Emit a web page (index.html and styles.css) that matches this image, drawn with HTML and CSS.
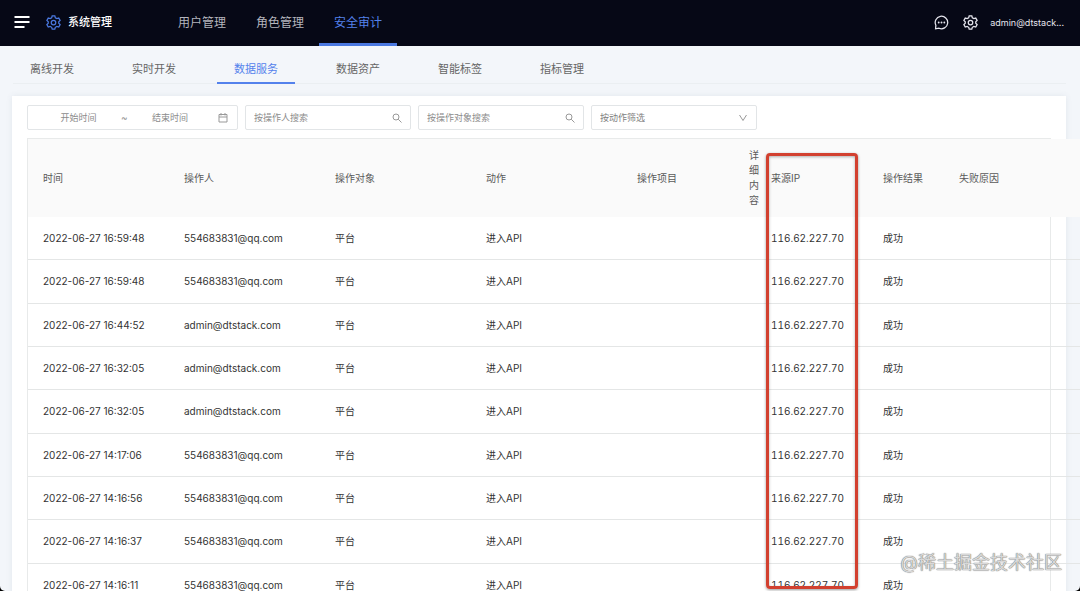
FILE: index.html
```html
<!DOCTYPE html>
<html lang="zh-CN">

<head>
  <meta charset="UTF-8">
  <meta name="viewport" content="width=device-width, initial-scale=1.0">
  <title>安全审计</title>
  <link rel="stylesheet" href="styles.css">
</head>

<body>
  <!-- gear is used twice in the header -->
  <svg class="sprite" aria-hidden="true">
    <symbol id="gear" viewBox="0 0 24 24">
      <path d="M9.900 1.300h4.200l.8 3.100 2.500 1.400 3-.9 2.200 3.700-2.200 2.200v2.400l2.200 2.300-2.200 3.700-3-.9-2.500 1.400-.8 3h-4.200l-.8-3-2.500-1.400-3 .9L1.400 15.500l2.200-2.300v-2.400L1.400 8.600l2.200-3.700 3 .9 2.500-1.400z" />
      <circle cx="12" cy="12" r="3.600" />
    </symbol>
  </svg>

  <div class="app">
    <header class="header">
      <button class="icon-btn menu-btn" type="button" aria-label="菜单">
        <svg width="16" height="14" viewBox="0 0 16 14">
          <path d="M0.500 2H15.500M0.500 7H15.500M0.500 12H10.500" />
        </svg>
      </button>
      <a class="brand" href="#">
        <svg class="gear" width="15" height="15"><use href="#gear" /></svg>
        <span>系统管理</span>
      </a>
      <nav class="main-nav">
        <a href="#">用户管理</a>
        <a href="#">角色管理</a>
        <a class="active" href="#">安全审计</a>
      </nav>
      <div class="header-right">
        <button class="icon-btn" type="button" aria-label="消息">
          <svg class="chat" width="15" height="15" viewBox="0 0 24 24">
            <path d="M2.500 22L3 16.500A10 10 0 1 1 8 21.200z" />
            <path class="dots" d="M7.500 12h.01M12 12h.01M16.500 12h.01" />
          </svg>
        </button>
        <button class="icon-btn" type="button" aria-label="设置">
          <svg class="gear" width="15" height="15"><use href="#gear" /></svg>
        </button>
        <a class="user" href="#">admin@dtstack...</a>
      </div>
    </header>

    <nav class="tabs">
      <a href="#">离线开发</a>
      <a href="#">实时开发</a>
      <a class="active" href="#">数据服务</a>
      <a href="#">数据资产</a>
      <a href="#">智能标签</a>
      <a href="#">指标管理</a>
    </nav>

    <main class="card">
      <form class="filters">
        <div class="field range">
          <input type="text" placeholder="开始时间" aria-label="开始时间">
          <span>~</span>
          <input type="text" placeholder="结束时间" aria-label="结束时间">
          <svg width="10" height="10" viewBox="0 0 10 10">
            <path d="M1 1.500H9V9H1zM1 4H9M3 0V2.500M7 0V2.500" />
          </svg>
        </div>
        <label class="field">
          <input type="text" placeholder="按操作人搜索" aria-label="按操作人搜索">
          <svg width="10" height="10" viewBox="0 0 10 10">
            <circle cx="4" cy="4" r="3" />
            <path d="M6.200 6.200L9.500 9.500" />
          </svg>
        </label>
        <label class="field">
          <input type="text" placeholder="按操作对象搜索" aria-label="按操作对象搜索">
          <svg width="10" height="10" viewBox="0 0 10 10">
            <circle cx="4" cy="4" r="3" />
            <path d="M6.200 6.200L9.500 9.500" />
          </svg>
        </label>
        <label class="field">
          <select aria-label="按动作筛选">
            <option>按动作筛选</option>
          </select>
          <svg width="10" height="10" viewBox="0 0 10 10">
            <path d="M1.500 2L5 7.500L8.500 2" />
          </svg>
        </label>
      </form>

      <div class="table-wrap">
        <table>
          <colgroup>
            <col class="col-time">
            <col class="col-wide">
            <col class="col-wide">
            <col class="col-wide">
            <col class="col-ip">
            <col class="col-detail">
            <col class="col-ip">
            <col class="col-result">
            <col class="col-reason">
          </colgroup>
          <thead>
            <tr>
              <th>时间</th>
              <th>操作人</th>
              <th>操作对象</th>
              <th>动作</th>
              <th>操作项目</th>
              <th>详细内容</th>
              <th>来源IP</th>
              <th>操作结果</th>
              <th>失败原因</th>
            </tr>
          </thead>
          <tbody>
            <tr><td>2022-06-27 16:59:48</td><td>554683831@qq.com</td><td>平台</td><td>进入API</td><td></td><td></td><td class="ip">116.62.227.70</td><td>成功</td><td></td></tr>
            <tr><td>2022-06-27 16:59:48</td><td>554683831@qq.com</td><td>平台</td><td>进入API</td><td></td><td></td><td class="ip">116.62.227.70</td><td>成功</td><td></td></tr>
            <tr><td>2022-06-27 16:44:52</td><td>admin@dtstack.com</td><td>平台</td><td>进入API</td><td></td><td></td><td class="ip">116.62.227.70</td><td>成功</td><td></td></tr>
            <tr><td>2022-06-27 16:32:05</td><td>admin@dtstack.com</td><td>平台</td><td>进入API</td><td></td><td></td><td class="ip">116.62.227.70</td><td>成功</td><td></td></tr>
            <tr><td>2022-06-27 16:32:05</td><td>admin@dtstack.com</td><td>平台</td><td>进入API</td><td></td><td></td><td class="ip">116.62.227.70</td><td>成功</td><td></td></tr>
            <tr><td>2022-06-27 14:17:06</td><td>554683831@qq.com</td><td>平台</td><td>进入API</td><td></td><td></td><td class="ip">116.62.227.70</td><td>成功</td><td></td></tr>
            <tr><td>2022-06-27 14:16:56</td><td>554683831@qq.com</td><td>平台</td><td>进入API</td><td></td><td></td><td class="ip">116.62.227.70</td><td>成功</td><td></td></tr>
            <tr><td>2022-06-27 14:16:37</td><td>554683831@qq.com</td><td>平台</td><td>进入API</td><td></td><td></td><td class="ip">116.62.227.70</td><td>成功</td><td></td></tr>
            <tr><td>2022-06-27 14:16:11</td><td>554683831@qq.com</td><td>平台</td><td>进入API</td><td></td><td></td><td class="ip">116.62.227.70</td><td>成功</td><td></td></tr>
          </tbody>
        </table>
        <div class="highlight"></div>
      </div>
    </main>

    <div class="watermark">@稀土掘金技术社区</div>
  </div>
</body>

</html>
```
FILE: styles.css
```css
* {
  box-sizing: border-box;
}

html {
  background: #000;
}

body {
  margin: 0;
  font-family: Inter, "Noto Sans CJK SC", sans-serif;
  font-size: 10px;
  line-height: 15px;
  color: #333;
}

a {
  color: inherit;
  text-decoration: none;
}

svg {
  flex: none;
  fill: none;
  stroke: currentColor;
}

.sprite {
  display: none;
}

.app {
  position: relative;
  display: flex;
  flex-direction: column;
  height: 100vh;
  overflow: hidden;
  background: #f3f6fa;
  border-radius: 0 0 5px 5px;
}

/* header */
.header {
  flex: none;
  display: flex;
  align-items: center;
  height: 46px;
  padding: 0 16px 2px 14px;
  background: #060816;
  color: #e6e6ee;
}

.icon-btn {
  display: flex;
  padding: 0;
  border: 0;
  background: none;
  color: inherit;
  cursor: pointer;
}

.menu-btn {
  stroke-width: 2;
  color: #fff;
}

.gear,
.chat {
  stroke-width: 2;
}

.chat .dots {
  stroke-width: 3;
  stroke-linecap: round;
}

.brand {
  display: flex;
  align-items: center;
  gap: 7px;
  width: 117px;
  margin-left: 16px;
  font-size: 11px;
  font-weight: 500;
  color: #fff;
}

.brand svg {
  color: #4a78e0;
}

.main-nav {
  display: flex;
  align-self: stretch;
  margin-bottom: -2px;
}

.main-nav a {
  padding: 2px 15px 0;
  font-size: 12px;
  line-height: 41px;
  color: #b4b5bd;
  border-bottom: 3px solid transparent;
}

.main-nav .active {
  color: #5482ec;
  border-color: #4a78e0;
}

.header-right {
  display: flex;
  align-items: center;
  gap: 14px;
  margin-left: auto;
}

.user {
  margin-left: -2px;
  font-size: 9px;
}

/* tabs */
.tabs {
  flex: none;
  display: flex;
  gap: 24px;
  margin: 0 14px 12px 13px;
  border-bottom: 1px solid #ebeff2;
}

.tabs a {
  width: 78px;
  margin-bottom: -1px;
  padding-top: 11px;
  font-size: 11px;
  line-height: 25px;
  text-align: center;
  color: #666;
  border-bottom: 2px solid transparent;
}

.tabs .active {
  color: #5482ec;
  border-color: #5482ec;
}

/* content */
.card {
  flex: 1;
  margin: 0 14px 0 12px;
  padding: 9px 15px 0;
  background: #fff;
  box-shadow: 0 0 6px rgba(80, 100, 120, 0.1);
}

.filters {
  display: flex;
  gap: 7px;
  margin-bottom: 8px;
}

.field {
  display: flex;
  align-items: center;
  width: 166px;
  height: 25px;
  padding: 0 8px;
  border: 1px solid #e2e5e7;
  border-radius: 2px;
  color: #999;
}

.field input,
.field select {
  flex: 1;
  min-width: 0;
  padding: 0;
  border: 0;
  outline: 0;
  appearance: none;
  background: none;
  font: inherit;
  font-size: 9px;
  color: #808080;
}

.field input::placeholder {
  color: #8c8c8c;
}

.range {
  width: 211px;
}

.range input {
  flex: 0 1 85px;
  text-align: center;
}

.range svg {
  margin: 0 1px 0 auto;
}

.table-wrap {
  position: relative;
  border: 1px solid #e8eaea;
}

/* columns are wider than the wrapper and run past it */
table {
  width: 1076px;
  table-layout: fixed;
  border-collapse: separate;
  border-spacing: 0;
}

.col-time {
  width: 141px;
}

.col-wide {
  width: 151px;
}

.col-ip {
  width: 112px;
}

.col-detail {
  width: 22px;
}

.col-result {
  width: 76px;
}

.col-reason {
  width: 160px;
}

th,
td {
  padding: 0 0 0 15px;
  text-align: left;
}

th {
  height: 78px;
  background: #fafafa;
  font-weight: 400;
  color: #595959;
}

td {
  height: 43px;
  border-bottom: 1px solid #e4e6e6;
}

tr:nth-child(3n + 2) td {
  height: 44px;
}

.ip {
  font-variant-numeric: tabular-nums;
}

.highlight {
  position: absolute;
  top: 14px;
  left: 738px;
  width: 92px;
  height: 436px;
  border: 3px solid #d2402f;
  border-radius: 4px;
  box-shadow: 0 1px 3px rgba(0, 0, 0, 0.4), inset 0 1px 3px rgba(0, 0, 0, 0.3);
}

.watermark {
  position: absolute;
  right: 18px;
  bottom: 16px;
  font-size: 18px;
  line-height: 24px;
  color: #d8d8d8;
  text-shadow: 0 0 1px #777, 0 0 1px #777;
}
```
